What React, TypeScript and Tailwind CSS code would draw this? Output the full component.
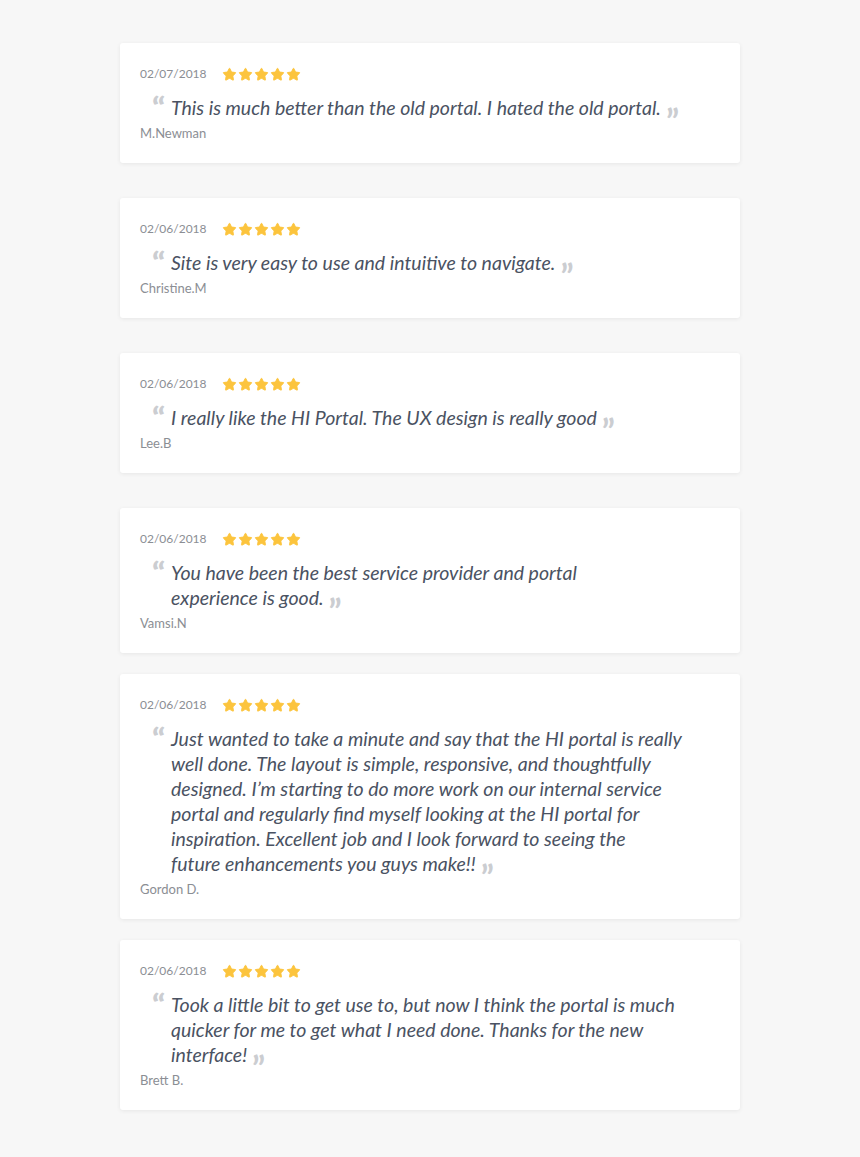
import { Star } from "lucide-react";

type Review = {
  date: string;
  lines: string[];
  author: string;
  gap: string;
};

const reviews: Review[] = [
  {
    date: "02/07/2018",
    lines: ["This is much better than the old portal. I hated the old portal."],
    author: "M.Newman",
    gap: "",
  },
  {
    date: "02/06/2018",
    lines: ["Site is very easy to use and intuitive to navigate."],
    author: "Christine.M",
    gap: "mt-[35px]",
  },
  {
    date: "02/06/2018",
    lines: ["I really like the HI Portal. The UX design is really good"],
    author: "Lee.B",
    gap: "mt-[35px]",
  },
  {
    date: "02/06/2018",
    lines: ["You have been the best service provider and portal", "experience is good."],
    author: "Vamsi.N",
    gap: "mt-[35px]",
  },
  {
    date: "02/06/2018",
    lines: [
      "Just wanted to take a minute and say that the HI portal is really",
      "well done. The layout is simple, responsive, and thoughtfully",
      "designed. I\u2019m starting to do more work on our internal service",
      "portal and regularly find myself looking at the HI portal for",
      "inspiration. Excellent job and I look forward to seeing the",
      "future enhancements you guys make!!",
    ],
    author: "Gordon D.",
    gap: "mt-[21px]",
  },
  {
    date: "02/06/2018",
    lines: [
      "Took a little bit to get use to, but now I think the portal is much",
      "quicker for me to get what I need done. Thanks for the new",
      "interface!",
    ],
    author: "Brett B.",
    gap: "mt-[21px]",
  },
];

export default function App() {
  return (
    <div className="min-h-[1157px] bg-[#f7f7f7] pt-[43px] pb-[46px] font-['Lato','Liberation_Sans',sans-serif]">
      <div className="mx-auto w-[620px]">
        {reviews.map((review, index) => (
          <ReviewCard key={index} review={review} />
        ))}
      </div>
    </div>
  );
}

function ReviewCard({ review }: { review: Review }) {
  return (
    <article
      className={`${review.gap} rounded-[3px] bg-white px-5 pt-[22px] pb-[21px] shadow-[0_1px_4px_rgba(0,0,0,0.07)]`}
    >
      <div className="flex h-[18px] items-center gap-[15px]">
        <span className="text-[12px] leading-[18px] text-[#8b8e94]">{review.date}</span>
        <div className="flex items-center gap-px">
          {[0, 1, 2, 3, 4].map((i) => (
            <Star key={i} className="h-[15px] w-[15px] fill-[#fcc43d] text-[#fcc43d]" strokeWidth={1.5} />
          ))}
        </div>
      </div>

      <div className="relative mt-3 pl-[31px] text-[19.5px] italic leading-[25px] text-[#4a5262]">
        <span className="absolute left-[12px] top-0 origin-left scale-x-[1.2] text-[28px] font-black not-italic leading-[24px] text-[#cbcdd1]">
          {"\u201C"}
        </span>
        {review.lines.map((line, i) => (
          <div key={i} className="whitespace-nowrap">
            {line}
            {i === review.lines.length - 1 ? (
              <span className="relative top-[19px] ml-[5px] text-[34px] font-bold not-italic leading-[0] text-[#cbcdd1]">
                {"\u201D"}
              </span>
            ) : null}
          </div>
        ))}
      </div>

      <p className="mt-1 text-[13px] leading-[18px] text-[#8b8e94]">{review.author}</p>
    </article>
  );
}
